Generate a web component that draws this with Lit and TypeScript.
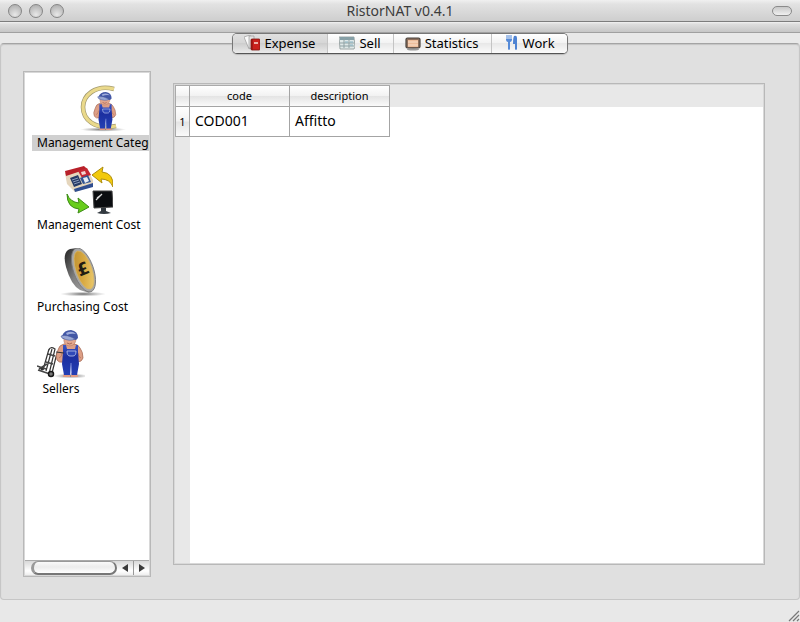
import { LitElement, html, css, svg } from "lit";
import { customElement, state } from "lit/decorators.js";
import { classMap } from "lit/directives/class-map.js";

const workerBody = svg`
  <defs><linearGradient id="denim" x2="0" y2="1"><stop offset="0" stop-color="#3a55c4"/><stop offset=".4" stop-color="#1c2fa0"/><stop offset="1" stop-color="#2440b4"/></linearGradient></defs>
  <path d="M27 14 Q22 15 21 20 Q18 26 20 30 Q22 33 26 32 L40 32 Q45 32 46 28 Q46 22 43 18 Q41 14 37 14 Z" fill="#dd9f86" stroke="#a8705c" stroke-width=".8"/>
  <path d="M22 28 Q25 27 25 23 M44 28 Q41 27 41 23" fill="none" stroke="#b57660" stroke-width=".8"/>
  <path d="M27 8 Q26 15 32 16 Q39 16 39 8 Z" fill="#e3a78d" stroke="#b57c66" stroke-width=".6"/>
  <path d="M27 43 h6 v4 h-7 Z M34 43 h6 l1 4 h-7 Z" fill="#e09a83"/>
  <path d="M26 15 L29 15 L30 19 L38 19 L39 15 L41 15 L41 22 L42 34 L40 45 L34.500 45 L34 34 L33 45 L27 45 L25 34 L26 22 Z" fill="url(#denim)"/>
  <path d="M34 33 V45" stroke="#8fa0e4" stroke-width=".8"/>
  <path d="M30 21 h9 q0 5 -3 5 h-3 q-3 0 -3 -5 Z" fill="#3049b8" stroke="#bcc5ec" stroke-width=".8"/>
  <path d="M25 6 Q27 0 34 0 Q41 1 41 8 L39 10 Q32 8 26 9 Z" fill="#4257a6"/>
  <path d="M29 3 Q35 0 39 4 Q34 3 30 5 Z" fill="#9eacdb"/>
  <path d="M24 6 Q30 4 38 9 Q33 12 25 8 Z" fill="#9aa8d4" stroke="#4b5c9f" stroke-width=".6"/>
  <path d="M30 13 q3 2 5 0" fill="none" stroke="#9d5c4b" stroke-width=".8"/>`;

const shadow = svg`
  <defs><radialGradient id="sh"><stop offset="0" stop-color="#333" stop-opacity=".75"/><stop offset="1" stop-color="#777" stop-opacity="0"/></radialGradient></defs>`;

const categoryIcon = html`<svg class="icon" viewBox="0 0 48 48">${shadow}
  <ellipse cx="25" cy="45.500" rx="23" ry="2.200" fill="url(#sh)"/>
  <path d="M36 5 C17 0 5 12 5 23 C5 36 17 46 38 42" fill="none" stroke="#a39a70" stroke-width="4.600"/>
  <path d="M36 5 C17 0 5 12 5 23 C5 36 17 46 38 42" fill="none" stroke="#ead98b" stroke-width="3.200"/>
  <g transform="translate(0 8) scale(.82 .81)">${workerBody}</g></svg>`;

const costIcon = html`<svg class="icon" viewBox="0 0 48 48">
  <path d="M0 7 L2 18 L10 26 L28 20 L28 14 L21 1 Z" fill="#e5d6bd"/>
  <path d="M0 5 L19 0 L22 3 L1 10 Z" fill="#b82029"/>
  <path d="M13 5 L22 2 L26 9 L17 12 Z" fill="#c52834"/>
  <path d="M16 6 l4 -1 l1 3 l-4 1 Z" fill="#f4d6d3"/>
  <path d="M5 12 L13 9 L17 18 L9 21 Z" fill="#263a66"/>
  <path d="M7 14 l6 -2 M8 16 l6 -2 M9 18 l6 -2" stroke="#a6b4cf" stroke-width=".8"/>
  <path d="M15 12 L23 9 L26 16 L18 18 Z" fill="#315594"/>
  <path d="M18 12 l4 -1 l2 4 l-4 2 Z" fill="#e8edf5"/>
  <path d="M9 23 L28 17 L28 21 L10 26 Z" fill="#304f91"/>
  <path d="M27 9 L38 1 L37 6 Q49 7 48 21 Q45 13 36 13 L37 17 Z" fill="#f2c90c" stroke="#ae8d0c" stroke-width="1"/>
  <path d="M2 28 Q5 36 14 37 L13 32 L24 41 L13 47 L14 43 Q2 42 2 28 Z" fill="#68cd1c" stroke="#3c8c16" stroke-width="1"/>
  <path d="M28 25 L47 25 L48 41 L29 42 Z" fill="#0b0d10" stroke="#444" stroke-width="1"/>
  <path d="M31 34 L37 28 M32 32 L36 29" stroke="#d8d8d8" stroke-width="1.300"/>
  <path d="M36 42 h5 v3 l5 2 q-7 2 -14 0 l4 -2 Z" fill="#333a40"/></svg>`;

const coinIcon = html`<svg class="icon" viewBox="0 0 48 48">
  <defs><linearGradient id="rim" x2="1" y2="1"><stop offset="0" stop-color="#222"/><stop offset=".5" stop-color="#808080"/><stop offset="1" stop-color="#aaa"/></linearGradient>
  <linearGradient id="gold" x2="1" y2="1"><stop offset="0" stop-color="#b98b2d"/><stop offset=".5" stop-color="#d9aa42"/><stop offset="1" stop-color="#f0d37a"/></linearGradient></defs>
  ${shadow}
  <ellipse cx="24" cy="46" rx="23" ry="2.500" fill="url(#sh)"/>
  <path d="M18 0 L11 1 Q3 4 7 19 Q12 37 21 42 L30 45 L33 40 Z" fill="url(#rim)"/>
  <ellipse cx="24.500" cy="22" rx="10" ry="23" transform="rotate(-19 24.500 22)" fill="#a7a7a7" stroke="#777" stroke-width=".8"/>
  <ellipse cx="25" cy="22" rx="8" ry="20" transform="rotate(-19 25 22)" fill="url(#gold)" stroke="#d7b767" stroke-width=".7"/>
  <text x="24" y="27" text-anchor="middle" transform="rotate(-22 24 21)" font-family="DejaVu Sans" font-size="17" font-weight="700" fill="#211c12">£</text></svg>`;

const sellersIcon = html`<svg class="icon" viewBox="0 0 48 48">${shadow}
  <ellipse cx="34" cy="46" rx="18" ry="2.500" fill="url(#sh)"/>
  <path d="M12 20 Q13 16 18 19 L12 44 M12 19 L6 40 M15 19 L9 41 M20 23 L15 43" fill="none" stroke="#333" stroke-width="1.200"/>
  <path d="M11 24 L18 26 M9 32 L16 34 M0 36 L9 39 M1 40 L13 44 M2 39 L10 34" stroke="#444" stroke-width="1.500"/>
  <circle cx="14" cy="44" r="2.500" fill="#777" stroke="#181818" stroke-width="1.500"/>
  <circle cx="5" cy="39" r="1.500" fill="#333"/>
  <g>${workerBody}</g>
  <path d="M19 22 L27 23" stroke="#333" stroke-width="1.200"/></svg>`;

const expenseGlyph = html`<svg class="glyph" viewBox="0 0 16 16">
  <path d="M0 2 L6 0 L9 11 L5 14 Z" fill="#fafafa" stroke="#999" stroke-width=".7"/>
  <path d="M5 1 L10 1 L10 14 L5 13 Z" fill="#e3e3e3" stroke="#999" stroke-width=".7"/>
  <rect x="7" y="4" width="9" height="11" rx="1" fill="#c9211c" stroke="#7e1510" stroke-width=".8"/>
  <rect x="10" y="7" width="4" height="2" fill="#edb1a8"/><path d="M8 4 V15" stroke="#80130f"/></svg>`;
const sellGlyph = html`<svg class="glyph" viewBox="0 0 16 16">
  <path d="M0 2 H15 L16 12 L15 14 H1 Z" fill="#dfe8e8" stroke="#8a9696" stroke-width=".8"/>
  <path d="M1 2 H15 V5 H1 Z" fill="#86a0a7"/><path d="M5 3 V13 M10 3 V13 M1 8 H15 M1 11 H15" stroke="#8fa1a4" stroke-width="1"/>
  <path d="M11 7 h3 M11 10 h3 M6 7 h3" stroke="#88b3c3"/></svg>`;
const statsGlyph = html`<svg class="glyph" viewBox="0 0 16 16">
  <ellipse cx="8" cy="14.500" rx="6" ry="1" fill="#999"/>
  <rect x="1" y="3" width="14" height="10" rx="1.500" fill="#8d6f5c" stroke="#49433f" stroke-width="1.200"/>
  <rect x="3" y="5" width="10" height="7" fill="#edbd9b"/><path d="M3 7 H13 M3 10 H13" stroke="#f8dfcb"/></svg>`;
const workGlyph = html`<svg class="glyph" viewBox="0 0 16 16">
  <path d="M4 0 V5 M6 0 V5 M8 0 V5" stroke="#6d9bde" stroke-width="1.200"/>
  <path d="M3 4 H9 Q9 7 7 7 V14 Q6 16 5 14 V7 Q3 7 3 4 Z" fill="#568bd8"/>
  <path d="M11 1 Q14 0 14 3 V14 Q13 16 12 14 V9 H10 Q10 3 11 1 Z" fill="#4d82d2"/></svg>`;

@customElement("app-root")
export class AppRoot extends LitElement {
  @state() private tab = 0;
  @state() private section = 0;

  private tabs = [
    { label: "Expense", glyph: expenseGlyph },
    { label: "Sell", glyph: sellGlyph },
    { label: "Statistics", glyph: statsGlyph },
    { label: "Work", glyph: workGlyph },
  ];
  private sections = [
    { label: "Management Category", icon: categoryIcon },
    { label: "Management Cost", icon: costIcon },
    { label: "Purchasing Cost", icon: coinIcon },
    { label: "Sellers", icon: sellersIcon },
  ];

  static styles = css`
    :host {
      display: flex;
      flex-direction: column;
      min-height: 100vh;
      background: #e8e8e8;
      color: #000;
      font: 13px/16px "Noto Sans", "Open Sans", sans-serif;
    }
    * { box-sizing: border-box; }
    button { font: inherit; color: inherit; border: 0; margin: 0; padding: 0; background: none; }
    .titlebar {
      display: grid;
      grid-template-columns: 1fr auto 1fr;
      align-items: center;
      height: 22px;
      padding: 0 8px;
      background: linear-gradient(#f0f0f0, #e2e2e2 20%, #cecece);
      border-bottom: 1px solid #7d7d7d;
    }
    .lights { display: flex; gap: 7px; }
    .light {
      width: 14px;
      height: 14px;
      border: 1px solid #868686;
      border-radius: 50%;
      background: radial-gradient(circle at 50% 80%, #e8e8e8, #b4b4b4 80%);
    }
    h1 { margin: 0; font-size: 14px; line-height: 20px; font-weight: 400; color: #3c3c3c; }
    .pill {
      justify-self: end;
      width: 20px;
      height: 10px;
      border: 1px solid #8a8a8a;
      border-radius: 5px;
      background: linear-gradient(#c8c8c8, #f0f0f0);
    }
    .toolbar {
      height: 11px;
      background: linear-gradient(#f2f2f2, #dedede 20%, #c6c6c6);
      border-bottom: 1px solid #a0a0a0;
    }
    .tabs {
      display: flex;
      align-self: center;
      height: 21px;
      margin-bottom: -11px;
      border: 1px solid #777;
      border-bottom-color: #555;
      border-radius: 5px;
      overflow: hidden;
      z-index: 1;
      background: #fff;
      box-shadow: 0 1px 1px #bbb;
    }
    .tab {
      display: flex;
      align-items: center;
      gap: 4px;
      padding: 0 12px 1px 11px;
      background: linear-gradient(#fff, #f2f2f2 49%, #e8e8e8 50%, #fbfbfb);
    }
    .tab + .tab { border-left: 1px solid #c4c4c4; }
    .tab.on { background: linear-gradient(#e0e0e0, #d6d6d6 49%, #cecece 50%, #eaeaea); }
    .glyph { width: 16px; height: 16px; }
    .panel {
      flex: 1;
      display: flex;
      gap: 22px;
      padding: 27px 34px 22px 22px;
      background: #e0e0e0;
      border: 1px solid #c6c6c6;
      border-top-color: #a4a4a4;
      border-radius: 4px;
      box-shadow: inset 0 1px 1px #c4c4c4;
    }
    .list, .view {
      background: #fff;
      border: 1px solid #b8b8b8;
      outline: 1px solid #d8d8d8;
      outline-offset: -2px;
    }
    .list { width: 128px; flex: none; display: flex; flex-direction: column; padding: 1px; }
    .items {
      flex: 1;
      display: flex;
      flex-direction: column;
      align-items: flex-start;
      gap: 15px;
      padding: 11px 0 0 7px;
      overflow: hidden;
    }
    .item {
      display: flex;
      flex-direction: column;
      align-items: center;
      gap: 3px;
      min-width: 58px;
      white-space: nowrap;
      font-size: 12px;
    }
    .icon { width: 48px; height: 48px; display: block; }
    .label { padding: 0 5px; }
    .item.on .label { background: #d0d0d0; }
    .scroll {
      display: flex;
      height: 15px;
      border-top: 1px solid #aaa;
      background: linear-gradient(#d8d8d8, #fff 70%, #eee);
    }
    .track { flex: 1; padding-left: 6px; }
    .thumb {
      height: 14px;
      border: 2px solid #777;
      border-top: 1px solid #999;
      border-left: 3px solid #999;
      border-radius: 7px;
      background: linear-gradient(#fafafa, #ececec 45%, #fff);
    }
    .arrow { width: 16px; display: grid; place-items: center; }
    .arrow + .arrow { border-left: 1px solid #999; }
    .arrow svg { width: 6px; height: 8px; fill: #3a3a3a; }
    .view {
      flex: 1;
      min-width: 0;
      margin: 12px 0;
      padding: 1px;
      background:
        linear-gradient(#e8e8e8, #e8e8e8) 1px 1px / 100% 22px no-repeat,
        linear-gradient(#e8e8e8, #e8e8e8) 1px 1px / 15px 100% no-repeat,
        #fff;
    }
    table {
      table-layout: fixed;
      width: 215px;
      border-spacing: 0;
      border-top: 1px solid #aaa;
      border-left: 1px solid #aaa;
    }
    .num { width: 14px; }
    th, td { padding: 0; border-right: 1px solid #a4a4a4; border-bottom: 1px solid #a4a4a4; }
    th { font-weight: 400; font-size: 11px; text-align: center; background: linear-gradient(#fff, #f2f2f2 48%, #e4e4e4 52%, #fafafa); }
    thead th { height: 21px; }
    td { height: 30px; padding: 0 0 2px 5px; font-size: 14px; background: #fff; }
    .status { height: 22px; display: flex; justify-content: flex-end; align-items: flex-end; }
    .grip { width: 12px; height: 12px; }
  `;

  render() {
    return html`
      <header class="titlebar">
        <div class="lights">
          <button class="light" aria-label="Close"></button>
          <button class="light" aria-label="Minimize"></button>
          <button class="light" aria-label="Zoom"></button>
        </div>
        <h1>RistorNAT v0.4.1</h1>
        <button class="pill" aria-label="Toggle toolbar"></button>
      </header>
      <div class="toolbar"></div>
      <nav class="tabs" role="tablist">
        ${this.tabs.map((t, i) => html`<button role="tab" aria-selected=${i === this.tab}
          class=${classMap({ tab: true, on: i === this.tab })}
          @click=${() => (this.tab = i)}>${t.glyph}<span>${t.label}</span></button>`)}
      </nav>
      <main class="panel">
        <div class="list">
          <div class="items">
            ${this.sections.map((s, i) => html`<button class=${classMap({ item: true, on: i === this.section })}
              @click=${() => (this.section = i)}>${s.icon}<span class="label">${s.label}</span></button>`)}
          </div>
          <div class="scroll">
            <div class="track"><div class="thumb"></div></div>
            <button class="arrow" aria-label="Scroll left"><svg viewBox="0 0 6 8"><path d="M6 0 V8 L0 4 Z"/></svg></button>
            <button class="arrow" aria-label="Scroll right"><svg viewBox="0 0 6 8"><path d="M0 0 V8 L6 4 Z"/></svg></button>
          </div>
        </div>
        <div class="view">
          <table>
            <colgroup><col class="num" /><col /><col /></colgroup>
            <thead><tr><th></th><th scope="col">code</th><th scope="col">description</th></tr></thead>
            <tbody><tr><th scope="row">1</th><td>COD001</td><td>Affitto</td></tr></tbody>
          </table>
        </div>
      </main>
      <footer class="status">
        <svg class="grip" viewBox="0 0 12 12"><path d="M1 11 L11 1 M5 11 L11 5 M9 11 L11 9" stroke="#777" stroke-width="1.200"/></svg>
      </footer>`;
  }
}
